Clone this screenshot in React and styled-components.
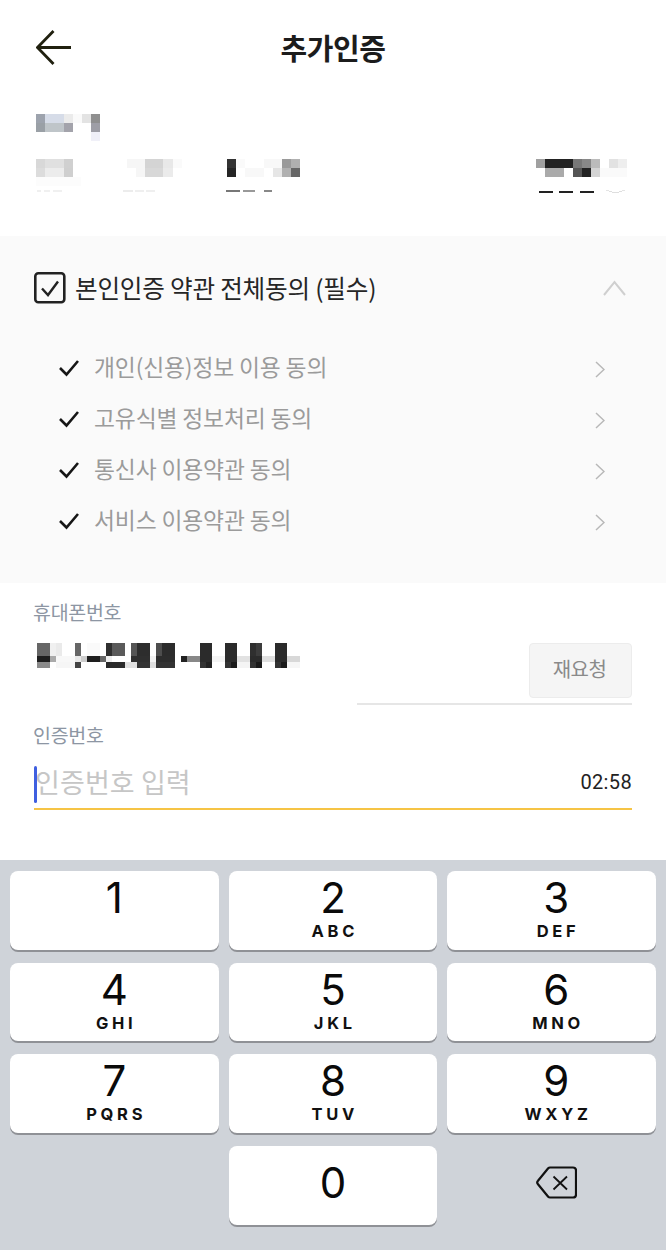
import styled, { createGlobalStyle } from "styled-components";

const GlobalStyle = createGlobalStyle`
  html, body {
    margin: 0;
    padding: 0;
    background: #fff;
    font-family: "Noto Sans CJK KR", "Noto Sans", sans-serif;
  }
  * { box-sizing: border-box; }
`;

const Page = styled.div`
  width: 666px;
  height: 1250px;
  overflow: hidden;
  display: flex;
  flex-direction: column;
`;

const Header = styled.header`
  height: 95px;
  display: grid;
  grid-template-columns: 1fr auto 1fr;
  align-items: center;
  padding-left: 36px;
`;

const Title = styled.h1`
  margin: 0 0 2px;
  font-size: 29px;
  font-weight: 700;
  line-height: 34px;
  letter-spacing: -0.4px;
  color: #1c1c1c;
  transform: translateX(-18px);
`;

const Info = styled.section`
  height: 141px;
  padding: 19px 0 0 36px;
`;

const InfoRow = styled.div`
  display: flex;
  margin-top: 18px;
`;

const MosaicBox = styled.svg`
  display: block;
  flex: none;
  margin-left: ${(props) => props.$gap || 0}px;
`;

const Agreement = styled.section`
  height: 347px;
  background: #fafafa;
`;

const AgreeHead = styled.div`
  height: 104px;
  display: flex;
  align-items: center;
  padding: 0 40px 0 34px;
`;

const AgreeTitle = styled.span`
  flex: 1;
  margin: 0 0 2px 9px;
  font-size: 24.6px;
  line-height: 32px;
  letter-spacing: -0.2px;
  color: #262626;
`;

const AgreeList = styled.ul`
  list-style: none;
  margin: 0;
  padding: 2px 61px 0 59px;
`;

const AgreeItem = styled.li`
  height: 51px;
  display: flex;
  align-items: center;

  & > svg:last-child {
    margin-top: 3px;
  }
`;

const ItemText = styled.span`
  flex: 1;
  margin: 0 0 2px 15px;
  font-size: 22.8px;
  line-height: 30px;
  letter-spacing: -0.15px;
  color: #9b9b9b;
`;

const Form = styled.section`
  flex: 1;
  padding: 17px 34px 0 33px;
`;

const Label = styled.div`
  font-size: 19.5px;
  line-height: 24px;
  letter-spacing: -0.3px;
  color: #8d96a3;
  margin-top: ${(props) => props.$top || 0}px;
`;

const PhoneRow = styled.div`
  display: flex;
  justify-content: space-between;
  margin-top: 19px;
  padding-left: 4px;
`;

const Resend = styled.div`
  width: 275px;
  height: 62px;
  padding-bottom: 5px;
  display: flex;
  justify-content: flex-end;
  border-bottom: 2px solid #e6e6e6;
`;

const ResendButton = styled.button`
  width: 103px;
  height: 55px;
  padding: 0 2px 4px 0;
  background: #f5f5f5;
  border: 1px solid #ececec;
  border-radius: 4px;
  font-family: inherit;
  font-size: 20px;
  letter-spacing: -0.6px;
  color: #8a8a8a;
`;

const CodeRow = styled.div`
  position: relative;
  height: 49px;
  margin: 14px 0 0 1px;
  padding: 0 0 5px 1px;
  display: flex;
  align-items: center;
  justify-content: space-between;
  border-bottom: 2px solid #f6c445;
`;

const Caret = styled.i`
  position: absolute;
  left: 0;
  top: 5px;
  width: 3px;
  height: 37px;
  border-radius: 2px;
  background: #3f5fe0;
`;

const Placeholder = styled.span`
  font-size: 27px;
  line-height: 36px;
  letter-spacing: 0.1px;
  color: #c6c6c6;
`;

const Timer = styled.span`
  font-family: "Roboto", sans-serif;
  font-size: 20px;
  letter-spacing: 0.35px;
  color: #222;
`;

const Keyboard = styled.section`
  height: 390px;
  background: #cfd3d9;
  padding: 11px 10px 0;
  display: grid;
  grid-template-columns: repeat(3, 1fr);
  grid-auto-rows: 78.7px;
  column-gap: 10px;
  row-gap: 13px;
`;

const Key = styled.div`
  display: flex;
  flex-direction: column;
  align-items: center;
  padding-top: ${(props) => (props.$center ? 12 : 2)}px;
  padding-left: ${(props) => (props.$right ? 9 : 0)}px;
  background: ${(props) => (props.$bare ? "transparent" : "#fff")};
  border-radius: 8px;
  box-shadow: ${(props) => (props.$bare ? "none" : "0 2px 0 #8f9196")};
  ${(props) => props.$bare && "justify-content: center; padding-top: 0; padding-bottom: 6px;"}
`;

const Digit = styled.span`
  font-family: "Inter", sans-serif;
  font-size: 42px;
  line-height: 50px;
  color: #0a0a0a;
`;

const Letters = styled.span`
  font-family: "Inter", sans-serif;
  font-size: 16.5px;
  font-weight: 700;
  line-height: 18px;
  margin-top: -1px;
  letter-spacing: 3.7px;
  margin-right: -3.7px;
  color: #111;
`;

// page coordinates: [x, y, w, h, colour]
const nameBlocks = [
  [36, 114, 9, 9, "#9da3ad"], [45, 114, 19, 9, "#d6dce8"], [64, 114, 9, 9, "#ebebeb"], [73, 114, 9, 9, "#fafafa"], [82, 114, 9, 9, "#e3e3e3"], [91, 114, 9, 9, "#8f8f8f"],
  [36, 123, 9, 9, "#9aa0a6"], [45, 123, 19, 9, "#bfc5c9"], [64, 123, 9, 9, "#a3a3ab"], [91, 123, 9, 9, "#9e9ea6"],
  [91, 132, 9, 9, "#f0f0f8"],
];

const groupA = [
  [36, 159, 9, 9, "#d8d8d8"], [45, 159, 19, 9, "#e0e0e0"], [64, 159, 9, 9, "#d0d0d0"],
  [36, 168, 9, 9, "#dcdcdc"], [45, 168, 19, 9, "#ececec"], [64, 168, 9, 9, "#cfcfcf"],
  [36, 177, 45, 9, "#fcfcfc"],
  [37, 190, 4, 2, "#efefef"], [44, 190, 6, 2, "#f0f0f0"], [53, 190, 9, 2, "#f0f0f0"],
];

const groupB = [
  [127, 159, 18, 9, "#f6f6f6"], [145, 159, 18, 9, "#d4d4d4"], [163, 159, 10, 9, "#e8e8e8"], [173, 159, 9, 9, "#fafafa"],
  [136, 168, 9, 9, "#f6f6f6"], [145, 168, 18, 9, "#d8d8d8"], [163, 168, 10, 9, "#ebebeb"],
  [123, 190, 10, 2, "#ececec"], [135, 190, 9, 2, "#efefef"], [146, 190, 9, 2, "#efefef"],
];

const groupC = [
  [227, 159, 9, 9, "#333"], [236, 159, 9, 9, "#fafafa"], [264, 159, 18, 9, "#f8f8f8"], [282, 159, 9, 9, "#9a9a9a"], [291, 159, 9, 9, "#b0b0b0"],
  [227, 168, 9, 9, "#252525"], [245, 168, 19, 9, "#f8f8f8"], [273, 168, 9, 9, "#e6e6e6"], [282, 168, 9, 9, "#b0b0b0"], [291, 168, 9, 9, "#666"],
  [226, 190, 14, 2, "#777"], [243, 190, 12, 2, "#999"], [264, 190, 8, 2, "#888"],
];

const groupD = [
  [536, 159, 9, 9, "#a0a0a0"], [545, 159, 28, 9, "#222"], [573, 159, 9, 9, "#777"], [582, 159, 9, 9, "#888"], [591, 159, 9, 9, "#bbb"], [609, 159, 9, 9, "#e2e2e2"], [618, 159, 9, 9, "#eee"],
  [545, 168, 19, 9, "#aaa"], [573, 168, 9, 9, "#555"], [582, 168, 9, 9, "#222"], [591, 168, 9, 9, "#d4d4d4"], [600, 168, 27, 9, "#fafafa"],
  [539, 191, 14, 2, "#222"], [559, 191, 14, 2, "#222"], [580, 191, 14, 2, "#222"],
  [606, 190, 3, 1, "#e4e4e4"], [609, 191, 3, 1, "#dedede"], [612, 192, 7, 1, "#dedede"], [619, 191, 3, 1, "#dedede"], [622, 190, 3, 1, "#e4e4e4"],
];

const phoneBlocks = [
  [37, 650, 13, 13, "#666"], [50, 650, 6, 13, "#f0f0f0"], [56, 650, 6, 13, "#eaeaea"], [75, 650, 6, 13, "#666"], [87, 650, 13, 13, "#fafafa"], [106, 650, 6, 13, "#2f2f2f"], [112, 650, 13, 13, "#5a5a5a"], [131, 650, 6, 13, "#555"], [137, 650, 13, 13, "#2d2d2d"], [156, 650, 6, 13, "#4d4d4d"], [162, 650, 13, 13, "#2c2c2c"], [200, 650, 12, 13, "#2b2b2b"], [225, 650, 12, 13, "#2b2b2b"], [250, 650, 6, 13, "#2f2f2f"], [256, 650, 6, 13, "#3c3c3c"], [275, 650, 12, 13, "#2b2b2b"],
  [37, 663, 13, 6, "#1e1e1e"], [50, 663, 6, 6, "#aaa"], [56, 663, 19, 6, "#f8f8f8"], [75, 663, 6, 6, "#e8e8e8"], [81, 663, 6, 6, "#ccc"], [87, 663, 13, 6, "#1e1e1e"], [100, 663, 6, 6, "#666"], [106, 663, 6, 6, "#f0f0f0"], [131, 663, 19, 6, "#2f2f2f"], [150, 663, 6, 6, "#f2f2f2"], [156, 663, 19, 6, "#2d2d2d"], [181, 663, 6, 6, "#222"], [187, 663, 13, 6, "#888"], [200, 663, 12, 6, "#2b2b2b"], [212, 663, 13, 6, "#f4f4f4"], [225, 663, 12, 6, "#2b2b2b"], [237, 663, 13, 6, "#e2e2e2"], [250, 663, 12, 6, "#2b2b2b"], [262, 663, 13, 6, "#e0e0e0"], [275, 663, 12, 6, "#2b2b2b"], [287, 663, 13, 6, "#d8d8d8"],
  [37, 669, 13, 6, "#8a8a8a"], [56, 669, 19, 6, "#f6f6f6"], [75, 669, 6, 6, "#444"], [106, 669, 19, 6, "#2a2a2a"], [125, 669, 12, 6, "#e0e0e0"], [137, 669, 13, 6, "#333"], [150, 669, 6, 6, "#ddd"], [156, 669, 19, 6, "#333"], [200, 669, 6, 6, "#333"], [206, 669, 6, 6, "#222"], [225, 669, 6, 6, "#333"], [231, 669, 6, 6, "#1a1a1a"], [237, 669, 13, 6, "#f4f4f4"], [250, 669, 6, 6, "#333"], [256, 669, 6, 6, "#1a1a1a"], [275, 669, 6, 6, "#333"], [281, 669, 6, 6, "#1a1a1a"], [287, 669, 13, 6, "#f6f6f6"],
];

function Mosaic({ x, y, width, height, blocks, gap }) {
  return (
    <MosaicBox $gap={gap} width={width} height={height} viewBox={`${x} ${y} ${width} ${height}`} shapeRendering="crispEdges">
      {blocks.map(([bx, by, bw, bh, fill], i) => (
        <rect key={i} x={bx} y={by} width={bw} height={bh} fill={fill} />
      ))}
    </MosaicBox>
  );
}

const BackArrow = () => (
  <svg width="36" height="36" viewBox="0 0 36 36" fill="none" stroke="#20200f" strokeWidth="2.8">
    <path d="M1.5 17.5H35" />
    <path d="M17.500 1 1.500 17.500 17.500 34" />
  </svg>
);

const CheckBox = () => (
  <svg width="32" height="32" viewBox="0 0 32 32" fill="none" stroke="#222" style={{ flex: "none" }}>
    <rect x="1.300" y="1.300" width="29" height="29" rx="3" strokeWidth="2.600" />
    <path d="M8 16.500 14 23 24 9.500" strokeWidth="2.400" />
  </svg>
);

const ChevronUp = () => (
  <svg width="23" height="16" viewBox="0 0 23 16" fill="none" stroke="#cfcfcf" strokeWidth="2">
    <path d="M1 15 11.500 2 22 15" />
  </svg>
);

const ItemCheck = () => (
  <svg width="20" height="18" viewBox="0 0 20 18" fill="none" stroke="#161616" strokeWidth="2.600" style={{ flex: "none" }}>
    <path d="M1 9 7.500 15.500 19 2" />
  </svg>
);

const ChevronRight = () => (
  <svg width="10" height="17" viewBox="0 0 10 17" fill="none" stroke="#b8b8b8" strokeWidth="1.500">
    <path d="M1 1 9 8.500 1 16" />
  </svg>
);

const Backspace = () => (
  <svg width="41" height="33" viewBox="0 0 41 33" fill="none" stroke="#111" strokeWidth="2.200" strokeLinejoin="round">
    <path d="M14 1.500H37a3 3 0 0 1 3 3V28.500a3 3 0 0 1-3 3H14a2.500 2.500 0 0 1-1.800-.8L2 18.200a2.500 2.500 0 0 1 0-3.400L12.200 2.300A2.500 2.500 0 0 1 14 1.500Z" />
    <path d="M17.500 10.500 31 23.500M31 10.500 17.500 23.500" strokeWidth="1.800" />
  </svg>
);

const items = ["개인(신용)정보 이용 동의", "고유식별 정보처리 동의", "통신사 이용약관 동의", "서비스 이용약관 동의"];

const keys = [
  ["1", ""], ["2", "ABC"], ["3", "DEF"],
  ["4", "GHI"], ["5", "JKL"], ["6", "MNO"],
  ["7", "PQRS"], ["8", "TUV"], ["9", "WXYZ"],
];

export default function App() {
  return (
    <Page>
      <GlobalStyle />
      <Header>
        <BackArrow />
        <Title>추가인증</Title>
      </Header>

      <Info>
        <Mosaic x={36} y={114} width={64} height={27} blocks={nameBlocks} />
        <InfoRow>
          <Mosaic x={36} y={159} width={46} height={34} blocks={groupA} />
          <Mosaic x={123} y={159} width={60} height={34} blocks={groupB} gap={41} />
          <Mosaic x={226} y={159} width={74} height={34} blocks={groupC} gap={43} />
          <Mosaic x={536} y={159} width={91} height={34} blocks={groupD} gap={236} />
        </InfoRow>
      </Info>

      <Agreement>
        <AgreeHead>
          <CheckBox />
          <AgreeTitle>본인인증 약관 전체동의 (필수)</AgreeTitle>
          <ChevronUp />
        </AgreeHead>
        <AgreeList>
          {items.map((item) => (
            <AgreeItem key={item}>
              <ItemCheck />
              <ItemText>{item}</ItemText>
              <ChevronRight />
            </AgreeItem>
          ))}
        </AgreeList>
      </Agreement>

      <Form>
        <Label>휴대폰번호</Label>
        <PhoneRow>
          <Mosaic x={37} y={650} width={263} height={25} blocks={phoneBlocks} />
          <Resend>
            <ResendButton>재요청</ResendButton>
          </Resend>
        </PhoneRow>
        <Label $top={18}>인증번호</Label>
        <CodeRow>
          <Caret />
          <Placeholder>인증번호 입력</Placeholder>
          <Timer>02:58</Timer>
        </CodeRow>
      </Form>

      <Keyboard>
        {keys.map(([digit, letters], i) => (
          <Key key={digit} $right={i % 3 === 2}>
            <Digit>{digit}</Digit>
            {letters && <Letters>{letters}</Letters>}
          </Key>
        ))}
        <Key $bare />
        <Key $center>
          <Digit>0</Digit>
        </Key>
        <Key $bare $right>
          <Backspace />
        </Key>
      </Keyboard>
    </Page>
  );
}
